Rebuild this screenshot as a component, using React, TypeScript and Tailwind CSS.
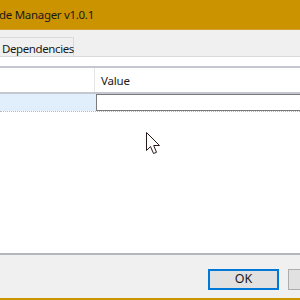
import React from 'react';

const Cursor = () => (
  <svg width="18" height="26" viewBox="0 0 18 26" className="absolute left-[146px] top-[132px]">
    <path d="M0.5 0.5 L0.5 18.5 L4.5 14.5 L7.5 21.5 L10.5 20.3 L7.7 13.5 L13.5 13.5 Z" fill="#ffffff" stroke="#2a1a1a" strokeWidth="1" />
  </svg>
);

export default function App() {
  return (
    <div
      className="relative w-[300px] h-[300px] flex flex-col overflow-hidden bg-white text-[12px] text-[#1a1a1a]"
      style={{ fontFamily: '"Noto Sans", "Open Sans", sans-serif' }}
    >
      <div className="h-[30px] shrink-0 bg-[#CC9300] border-b border-[#D6A230] flex items-center">
        <span className="leading-none text-[11.5px] tracking-[-0.3px] -ml-[1px]">de Manager v1.0.1</span>
      </div>

      <div className="h-[27px] shrink-0 bg-[#F0F0F0] border-b border-[#DADADA] flex items-end">
        <div className="h-[19px] w-[74px] bg-[#F0F0F0] border-r border-t border-[#DADADA] flex items-center pl-[2px] pt-[3px] text-[11.5px] tracking-[-0.4px]">
          Dependencies
        </div>
      </div>

      <div className="flex-1 flex flex-col bg-white pt-[9px]">
        <div className="border-t-2 border-[#C4C8CE]">
          <div className="h-[26px] flex border-b-2 border-[#C4C8CE]">
            <div className="w-[95px] border-r border-[#E5E5E5]" />
            <div className="flex-1 flex items-center pl-[6px] pt-[2px] text-[11.5px] tracking-[-0.2px]">Value</div>
          </div>
          <div className="h-[18px] flex border-b border-dotted border-[#B8B8B8]">
            <div className="w-[96px] bg-[#E1EFFC]" />
            <div className="flex-1 -mr-[3px] border border-[#7A7A7A] bg-white" />
          </div>
        </div>
      </div>

      <div className="h-[45px] shrink-0 bg-[#F0F0F0] border-t-2 border-[#B4B8BE] flex items-start pt-[14px]">
        <div className="ml-[208px] w-[71px] h-[21px] shrink-0 border-2 border-[#0078D7] bg-[#E1E1E1] flex items-center justify-center text-[12.5px]">
          OK
        </div>
        <div className="ml-[9px] w-[71px] h-[21px] shrink-0 border border-[#ADADAD] bg-[#E1E1E1]" />
      </div>
      <div className="h-[2px] shrink-0 bg-[#CC9300]" />

      <Cursor />
    </div>
  );
}
